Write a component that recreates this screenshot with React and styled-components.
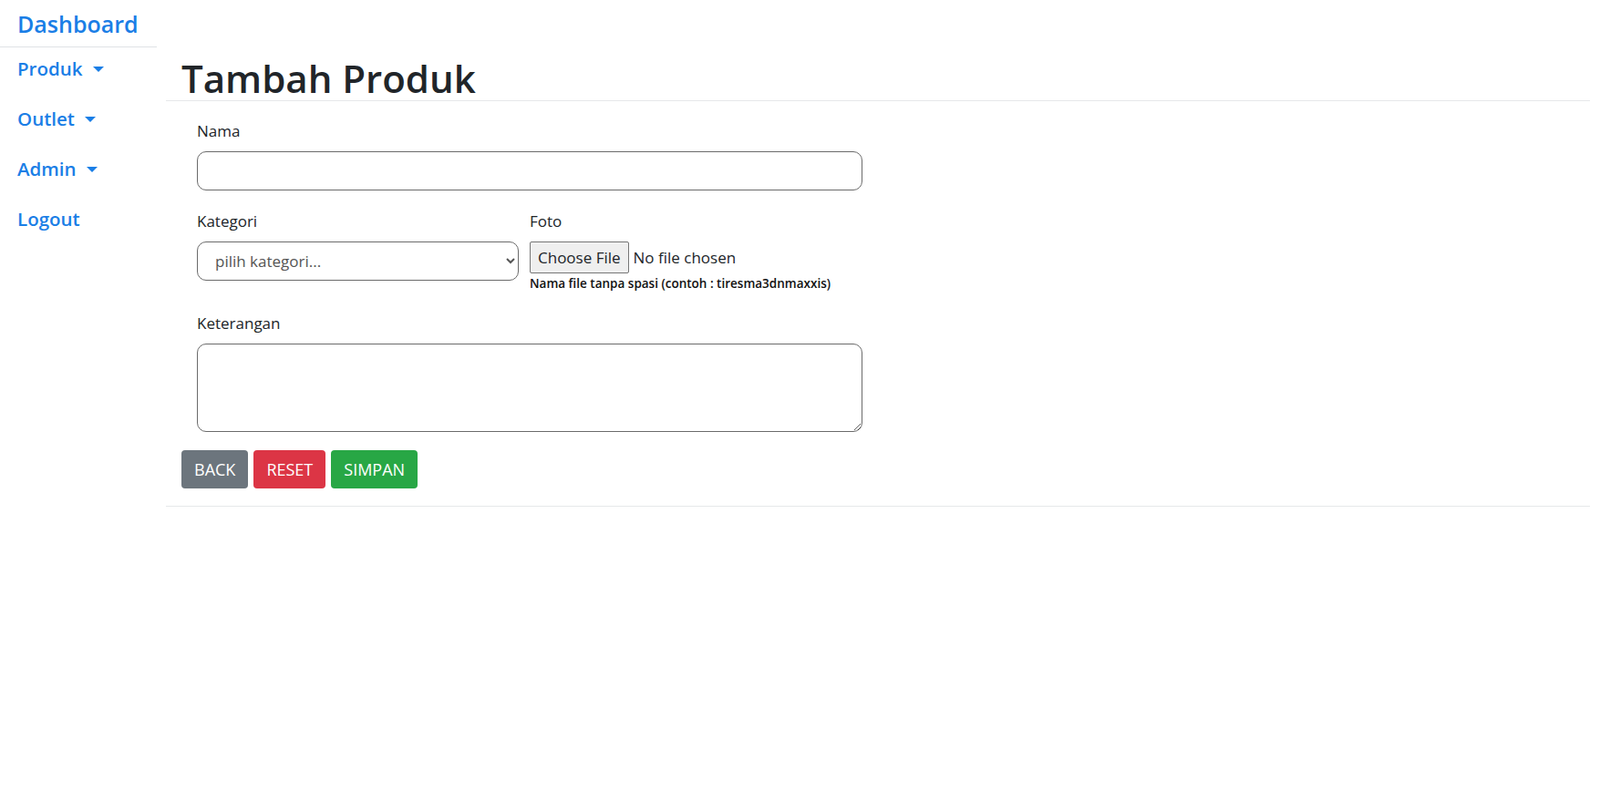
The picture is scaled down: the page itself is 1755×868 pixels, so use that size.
import React from "react";
import styled, { createGlobalStyle } from "styled-components";

const GlobalStyle = createGlobalStyle`
  html, body {
    margin: 0;
    padding: 0;
    background: #fff;
  }
  body {
    font-family: "Open Sans", "Noto Sans", "Liberation Sans", sans-serif;
    color: #212529;
  }
  * {
    box-sizing: border-box;
  }
`;

function App() {
  return (
    <Page>
      <GlobalStyle />
      <Sidebar>
        <Brand href="#">Dashboard</Brand>
        <NavList>
          <NavItem>
            <NavLink href="#" dropdown>
              Produk
            </NavLink>
          </NavItem>
          <NavItem>
            <NavLink href="#" dropdown>
              Outlet
            </NavLink>
          </NavItem>
          <NavItem>
            <NavLink href="#" dropdown>
              Admin
            </NavLink>
          </NavItem>
          <NavItem>
            <NavLink href="#">Logout</NavLink>
          </NavItem>
        </NavList>
      </Sidebar>
      <Main>
        <Header>
          <Title>Tambah Produk</Title>
        </Header>
        <Form onSubmit={(e) => e.preventDefault()}>
          <Fields>
            <FormGroup>
              <Label>Nama</Label>
              <TextInput type="text" />
            </FormGroup>
            <FormRow>
              <FormGroup>
                <Label>Kategori</Label>
                <Select defaultValue="">
                  <option value="">pilih kategori...</option>
                </Select>
              </FormGroup>
              <FormGroup>
                <Label>Foto</Label>
                <FileInput type="file" />
                <Hint>Nama file tanpa spasi (contoh : tiresma3dnmaxxis)</Hint>
              </FormGroup>
            </FormRow>
            <FormGroup>
              <Label>Keterangan</Label>
              <TextArea />
            </FormGroup>
          </Fields>
          <ButtonRow>
            <Button type="button" variant="secondary">
              Back
            </Button>
            <Button type="reset" variant="danger">
              Reset
            </Button>
            <Button type="submit" variant="success">
              Simpan
            </Button>
          </ButtonRow>
        </Form>
      </Main>
    </Page>
  );
}

const Page = styled.div`
  display: flex;
  min-height: 100vh;
`;

const Sidebar = styled.nav`
  width: 172px;
  flex-shrink: 0;
`;

const Brand = styled.a`
  display: block;
  padding: 6px 19px 4px;
  font-size: 25px;
  line-height: 41px;
  font-weight: 600;
  color: #1a7ee6;
  text-decoration: none;
  border-bottom: 1px solid #dfe2e5;
`;

const NavList = styled.ul`
  list-style: none;
  margin: -4.5px 0 0;
  padding: 0;
`;

const NavItem = styled.li`
  height: 55px;
`;

const NavLink = styled.a`
  display: flex;
  align-items: center;
  height: 100%;
  padding: 0 19px;
  font-size: 20.5px;
  font-weight: 600;
  color: #1a7ee6;
  text-decoration: none;

  &::after {
    content: ${(p) => (p.dropdown ? "''" : "none")};
    display: inline-block;
    margin-left: 11px;
    margin-top: 2px;
    border-top: 6px solid currentColor;
    border-left: 6px solid transparent;
    border-right: 6px solid transparent;
  }
`;

const Main = styled.main`
  flex: 1;
  padding: 0 11px 0 10px;
`;

const Header = styled.div`
  padding: 61px 17px 0;
  border-bottom: 1px solid #e6e8ea;
`;

const Title = styled.h1`
  margin: 0;
  font-size: 42px;
  line-height: 49px;
  font-weight: 600;
  color: #212529;
`;

const Form = styled.form`
  padding: 18.5px 17px 18.5px;
  border-bottom: 1px solid #e6e8ea;
`;

const Fields = styled.div`
  width: 764px;
  padding-left: 17px;
  padding-right: 17px;
`;

const FormGroup = styled.div`
  margin-bottom: 19.5px;
`;

const FormRow = styled.div`
  display: grid;
  grid-template-columns: 353px 1fr;
  column-gap: 12px;
`;

const Label = styled.label`
  display: block;
  margin-bottom: 8.5px;
  font-size: 17px;
  line-height: 27.5px;
  color: #212529;
`;

const fieldBorder = "1px solid #6b6b6b";

const TextInput = styled.input`
  display: block;
  width: 100%;
  height: 43.5px;
  padding: 0 14px;
  border: ${fieldBorder};
  border-radius: 10px;
  font: inherit;
  font-size: 17px;
  background: #fff;
  outline: none;
`;

const Select = styled.select`
  display: block;
  width: 100%;
  height: 43px;
  padding: 0 10px 0 15px;
  border: ${fieldBorder};
  border-radius: 10px;
  font-family: inherit;
  font-size: 17px;
  color: #555;
  background: #fff;
`;

const FileInput = styled.input`
  display: block;
  height: 35px;
  font-family: inherit;
  font-size: 17px;
  color: #212529;

  &::file-selector-button {
    height: 35px;
    margin-right: 5px;
    padding: 0 8px;
    font-family: inherit;
    font-size: 17px;
    color: #212529;
    background: #efefef;
    border: 1px solid #767676;
    border-radius: 2px;
  }
`;

const Hint = styled.small`
  display: block;
  margin-top: 1.5px;
  font-size: 13.5px;
  line-height: 20px;
  font-weight: 600;
  color: #111;
`;

const TextArea = styled.textarea`
  display: block;
  width: 100%;
  height: 97.5px;
  padding: 8px 14px;
  border: ${fieldBorder};
  border-radius: 10px;
  font: inherit;
  font-size: 17px;
  resize: vertical;
  outline: none;
`;

const buttonColors = {
  secondary: "#6c757d",
  danger: "#dc3545",
  success: "#28a745",
};

const ButtonRow = styled.div`
  display: flex;
  gap: 6px;
`;

const Button = styled.button`
  height: 42.5px;
  padding: 0 14px;
  border: none;
  border-radius: 4px;
  font-family: inherit;
  font-size: 18px;
  text-transform: uppercase;
  color: #fff;
  background: ${(p) => buttonColors[p.variant]};
  cursor: pointer;
`;

export default App;
